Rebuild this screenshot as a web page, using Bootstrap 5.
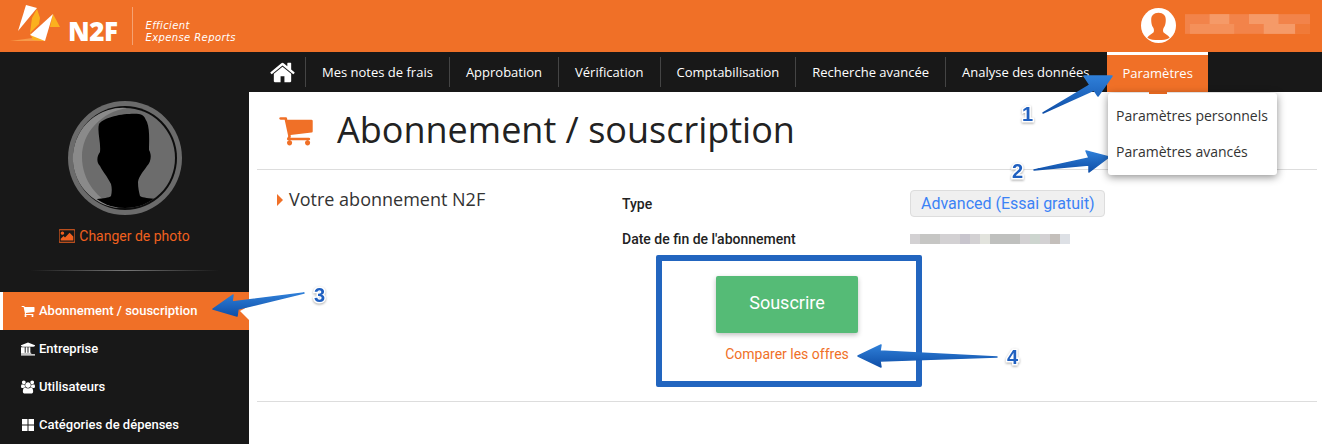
<!DOCTYPE html>
<html lang="fr">
<head>
    <meta charset="UTF-8">
    <meta name="viewport" content="width=device-width, initial-scale=1.0">
    <title>Abonnement / souscription</title>
    <link href="https://cdn.jsdelivr.net/npm/bootstrap@5.3.0/dist/css/bootstrap.min.css" rel="stylesheet">
    <style>
        html, body { height: 444px; overflow: hidden; }
        body { font-family: Roboto, sans-serif; background: #fff; position: relative; }
        svg { display: block; flex: none; }
        .top-band { height: 52px; background: #f07027; }
        .brand-word { font: 800 26px/1 "Open Sans", sans-serif; letter-spacing: -.5px; color: #fff; margin: 9px 0 0 -2px; }
        .brand-sep { width: 1px; height: 38px; background: rgba(255,255,255,.35); margin: 0 12px 0 15px; }
        .brand-tag { font: italic 400 10px/12px "DejaVu Sans", sans-serif; color: #fff; letter-spacing: .4px; margin-top: 11px; }
        .user-zone { margin-right: 12px; padding-bottom: 2px; }
        .user-blur { margin: 0 0 2px 9px; }
        .menu-band { height: 40px; background: #181818; padding-left: 257px; }
        .menu-link { font: 400 13px/40px "Open Sans", sans-serif; color: #fff; padding: 0 17px 0 16px; text-decoration: none; position: relative; white-space: nowrap; }
        .menu-link::after { content: ""; position: absolute; right: 0; top: 5px; bottom: 5px; width: 1px; background: #444; }
        .menu-home { padding: 0 10px 0 12px; display: flex; align-items: center; }
        .menu-link.last-link::after { display: none; }
        .menu-active { background: #f07027; border-top: 3px solid #fff; line-height: 36px; width: 101px; padding: 0 16px; }
        .menu-active::after { display: none; }
        .menu-drop { position: absolute; left: 1108px; top: 93px; width: 169px; height: 82px; display: block; min-width: 0; margin: 0; padding: 5px 0; border: 0; border-radius: 3px; box-shadow: 0 2px 8px rgba(0,0,0,.45); }
        .menu-drop::before { content: ""; position: absolute; left: 41px; top: -1px; width: 18px; height: 2px; background: #e2661f; }
        .menu-drop .dropdown-item { font: 400 14px/36px "Open Sans", sans-serif; padding: 0 8px; color: #333; white-space: nowrap; }
        .side-panel { width: 249px; height: 352px; background: #181818; flex: none; }
        .photo-link { font-size: 14px; color: #f0601f; text-decoration: none; margin-top: 10px; height: 20px; line-height: 20px; }
        .side-rule { height: 1px; margin: 24px 30px 21px; background: linear-gradient(90deg, #181818, #777 50%, #181818); }
        .side-link { height: 38px; padding-left: 21px; font-size: 13px; font-weight: 500; color: #fff; text-decoration: none; }
        .side-link.is-on { background: #f07027; border-left: 3px solid #fff; padding-left: 18px; }
        .main-pane { padding: 0 5px 0 8px; min-width: 0; }
        .title-row { height: 78px; border-bottom: 1px solid #ddd; padding: 0 0 1px 21px; }
        .page-title { font: 400 36px/1 "Open Sans", sans-serif; color: #222; margin: 0 0 1px 23px; }
        .body-row { height: 232px; border-bottom: 1px solid #ddd; padding: 20px 0 0 20px; }
        .section-col { width: 345px; flex: none; }
        .section-name { font: 400 18px/18px "Open Sans", sans-serif; color: #333; margin-left: 6px; }
        .section-mark { width: 0; height: 0; border-left: 6px solid #f07027; border-top: 6px solid transparent; border-bottom: 6px solid transparent; }
        .field-label { width: 288px; flex: none; font-size: 14px; font-weight: 500; line-height: 21px; padding-top: 2px; color: #222; }
        .plan-tag { background: #f0f0f0; border: 1px solid #ddd; border-radius: 4px; color: #3b82f6; font-size: 16px; line-height: 25px; padding: 0 10px 0 10px; width: 195px; white-space: nowrap; }
        .date-row { margin-top: 10px; }
        .offer-box { width: 266px; height: 132px; border: 6px solid #2265bf; border-radius: 2px; margin: 5px 0 0 34px; padding: 15px 4px 0 0; }
        .buy-btn { width: 142px; height: 57px; background: #55bb76; color: #fff; font-size: 18px; line-height: 54px; padding: 0 0 3px; border: 0; border-radius: 2px; box-shadow: 0 2px 5px rgba(0,0,0,.25); }
        .offer-link { font-size: 14px; color: #f07027; text-decoration: none; margin-top: 12px; line-height: 18px; }
        .note-layer { position: absolute; left: 0; top: 0; pointer-events: none; }
        .note-num { font: 700 20px "Liberation Sans", sans-serif; fill: #2060c0; stroke: #fff; stroke-width: 3px; paint-order: stroke; filter: drop-shadow(0 1px 1px #aaa); }
    </style>
</head>
<body>

    <header class="top-band d-flex align-items-center justify-content-between">
        <div class="d-flex align-items-center">
            <svg width="62" height="44" viewBox="0 0 62 44" class="ms-2">
                <polygon points="2,37 32,33 37,37" fill="#f79a4a"/>
                <polygon points="29,5 32,14 31,20 22,29 24,14" fill="#fbb11e"/>
                <polygon points="18,1 29,4 10,27" fill="#fff"/>
                <polygon points="22,29 37,37 25,36" fill="#fbb11e"/>
                <polygon points="45,10 52,23 42,23" fill="#fbb11e"/>
                <polygon points="45,10 37,37 22,31" fill="#fff"/>
            </svg>
            <span class="brand-word">N2F</span>
            <span class="brand-sep"></span>
            <span class="brand-tag">Efficient<br>Expense Reports</span>
        </div>
        <div class="user-zone d-flex align-items-center">
            <svg width="35" height="35" viewBox="0 0 36 36">
                <circle cx="18" cy="18" r="18" fill="#fff"/>
                <path d="M18 5c-5 0-7.500 3-7.500 7 0 3 .5 6 2 8 1 2 1 3 .5 5-2 2-5 3-6.500 5.500 3 2 7 2.500 11.500 2.500s8.500-.5 11.500-2.500c-1.500-2.500-4.500-3.500-6.500-5.500-.5-2-.5-3 .5-5 1.500-2 2-5 2-8 0-4-2.500-7-7.500-7z" fill="#f07027"/>
            </svg>
            <svg class="user-blur" width="125" height="20" viewBox="0 0 127 20" aria-hidden="true">
                <rect width="127" height="20" fill="#f2834a"/>
                <rect x="25" width="20" height="10" fill="#f59a68"/>
                <rect x="65" y="0" width="30" height="10" fill="#f59a68"/>
                <rect x="5" y="10" width="45" height="10" fill="#f4905a"/>
                <rect x="80" y="10" width="32" height="10" fill="#f59a68"/>
                <rect x="112" y="10" width="15" height="10" fill="#f07a38"/>
            </svg>
        </div>
    </header>

    <nav class="menu-band d-flex">
        <a href="#" class="menu-link menu-home">
            <svg width="27" height="27" viewBox="0 0 1792 1792"><path fill="#fff" d="M1472 992v480q0 26-19 45t-45 19h-384v-384h-256v384h-384q-26 0-45-19t-19-45v-480q0-1 .5-3t.5-3l575-474 575 474q1 2 1 6zm223-69l-62 74q-8 9-21 11h-3q-13 0-21-7l-692-577-692 577q-12 8-24 7-13-2-21-11l-62-74q-8-10-7-23.5t11-21.5l719-599q32-26 76-26t76 26l244 204v-195q0-14 9-23t23-9h192q14 0 23 9t9 23v408l219 182q10 8 11 21.5t-7 23.5z"/></svg>
        </a>
        <a href="#" class="menu-link">Mes notes de frais</a>
        <a href="#" class="menu-link">Approbation</a>
        <a href="#" class="menu-link">Vérification</a>
        <a href="#" class="menu-link">Comptabilisation</a>
        <a href="#" class="menu-link">Recherche avancée</a>
        <a href="#" class="menu-link last-link">Analyse des données</a>
        <a href="#" class="menu-link menu-active">Paramètres</a>
    </nav>

    <div class="d-flex">
        <aside class="side-panel d-flex flex-column">
            <svg class="mx-auto mt-2" width="116" height="116" viewBox="0 0 116 116">
                <defs><clipPath id="discClip"><circle cx="58" cy="58" r="50"/></clipPath></defs>
                <circle cx="58" cy="58" r="57" fill="#6b6b6b"/>
                <circle cx="58" cy="58" r="52" fill="#0c0c0c"/>
                <circle cx="58" cy="58" r="50" fill="#6c6c6c"/>
                <path d="M60 8A50 50 0 0 0 52 108C30 100 15 80 15 57 15 32 35 12 60 8z" fill="#8a8a8a"/>
                <path clip-path="url(#discClip)" d="M32 24C38 16 60 13 72 14 78 15 78 19 80 22 83 30 82 42 82 50 85 55 84 62 80 66 76 72 72 76 71 82 71 88 72 92 73 96 76 98 82 98 90 99L90 120 26 120 30 99C36 98 42 98 44 96 45 92 45 88 44 84 40 76 36 72 33 66 29 62 30 56 33 52 34 42 30 32 32 24z" fill="#000"/>
            </svg>
            <a href="#" class="photo-link d-flex align-items-center justify-content-center gap-1">
                <svg width="16" height="16" viewBox="0 0 1792 1792"><path fill="currentColor" d="M576 576q0 80-56 136t-136 56-136-56-56-136 56-136 136-56 136 56 56 136zm1024 384v448h-1408v-192l320-320 160 160 512-512zm96-704h-1600q-13 0-22.500 9.500t-9.500 22.500v1216q0 13 9.500 22.500t22.500 9.500h1600q13 0 22.500-9.500t9.500-22.500v-1216q0-13-9.500-22.500t-22.500-9.500zm160 32v1216q0 66-47 113t-113 47h-1600q-66 0-113-47t-47-113v-1216q0-66 47-113t113-47h1600q66 0 113 47t47 113z"/></svg>
                Changer de photo
            </a>
            <div class="side-rule"></div>
            <a href="#" class="side-link is-on d-flex align-items-center gap-1">
                <svg width="14" height="14" viewBox="0 0 1792 1792"><path fill="#fff" d="M704 1536q0 52-38 90t-90 38-90-38-38-90 38-90 90-38 90 38 38 90zm896 0q0 52-38 90t-90 38-90-38-38-90 38-90 90-38 90 38 38 90zm128-1088v512q0 24-16.500 42.500t-40.500 21.500l-1044 122q13 60 13 70 0 16-24 64h920q26 0 45 19t19 45-19 45-45 19h-1024q-26 0-45-19t-19-45q0-11 8-31.500t16-36 21.500-40 15.500-29.500l-177-823h-204q-26 0-45-19t-19-45 19-45 45-19h256q16 0 28.500 6.500t19.500 15.500 13 24.500 8 26 5.500 29.500 4.500 26h1201q26 0 45 19t19 45z"/></svg>
                Abonnement / souscription
            </a>
            <a href="#" class="side-link d-flex align-items-center gap-1">
                <svg width="14" height="14" viewBox="0 0 1920 1792"><path fill="#fff" d="M960 0l960 384v128h-128q0 26-20.500 45t-48.500 19h-1526q-28 0-48.500-19t-20.500-45h-128v-128zm-704 640h256v768h128v-768h256v768h128v-768h256v768h59q28 0 48.500 19t20.500 45v64h-1664v-64q0-26 20.500-45t48.500-19h59v-768zm1595 960q28 0 48.500 19t20.500 45v128h-1920v-128q0-26 20.500-45t48.500-19h1782z"/></svg>
                Entreprise
            </a>
            <a href="#" class="side-link d-flex align-items-center gap-1">
                <svg width="14" height="14" viewBox="0 0 1920 1792"><path fill="#fff" d="M593 896q-162 5-265 128h-134q-82 0-138-40.500t-56-118.500q0-353 124-353 6 0 43.500 21t97.500 42.500 119 21.500q67 0 133-23-5 37-5 66 0 139 81 256zm1071 637q0 120-73 189.500t-194 69.500h-874q-121 0-194-69.500t-73-189.500q0-53 3.500-103.500t14-109 26.500-108.500 43-97.500 62-81 85.500-53.500 111.500-20q10 0 43 21.500t73 48 107 48 135 21.500 135-21.500 107-48 73-48 43-21.500q61 0 111.500 20t85.500 53.500 62 81 43 97.500 26.500 108.500 14 109 3.500 103.500zm-1024-1277q0 106-75 181t-181 75-181-75-75-181 75-181 181-75 181 75 75 181zm704 384q0 159-112.500 271.500t-271.500 112.500-271.500-112.500-112.500-271.500 112.500-271.500 271.500-112.500 271.500 112.500 112.500 271.500zm576 225q0 78-56 118.500t-138 40.500h-134q-103-123-265-128 81-117 81-256 0-29-5-66 66 23 133 23 59 0 119-21.500t97.500-42.500 43.500-21q124 0 124 353zm-128-609q0 106-75 181t-181 75-181-75-75-181 75-181 181-75 181 75 75 181z"/></svg>
                Utilisateurs
            </a>
            <a href="#" class="side-link d-flex align-items-center gap-1">
                <svg width="14" height="14" viewBox="0 0 14 14"><path fill="#fff" d="M1 1h5.500v5.500H1zM7.500 1H13v5.500H7.500zM1 7.500h5.500V13H1zM7.500 7.500H13V13H7.500z"/></svg>
                Catégories de dépenses
            </a>
        </aside>

        <main class="main-pane flex-grow-1">
            <div class="title-row d-flex align-items-center">
                <svg width="36" height="36" viewBox="0 0 1792 1792"><path fill="#f07027" d="M704 1536q0 52-38 90t-90 38-90-38-38-90 38-90 90-38 90 38 38 90zm896 0q0 52-38 90t-90 38-90-38-38-90 38-90 90-38 90 38 38 90zm128-1088v512q0 24-16.500 42.500t-40.500 21.500l-1044 122q13 60 13 70 0 16-24 64h920q26 0 45 19t19 45-19 45-45 19h-1024q-26 0-45-19t-19-45q0-11 8-31.500t16-36 21.500-40 15.500-29.500l-177-823h-204q-26 0-45-19t-19-45 19-45 45-19h256q16 0 28.500 6.500t19.500 15.500 13 24.500 8 26 5.500 29.500 4.500 26h1201q26 0 45 19t19 45z"/></svg>
                <h1 class="page-title">Abonnement / souscription</h1>
            </div>
            <div class="body-row d-flex">
                <div class="section-col d-flex align-items-start">
                    <span class="section-mark mt-1"></span>
                    <span class="section-name">Votre abonnement N2F</span>
                </div>
                <div class="flex-grow-1">
                    <div class="d-flex align-items-center">
                        <span class="field-label">Type</span>
                        <span class="plan-tag">Advanced (Essai gratuit)</span>
                    </div>
                    <div class="date-row d-flex align-items-center">
                        <span class="field-label">Date de fin de l'abonnement</span>
                        <svg width="160" height="14" viewBox="0 0 160 14" aria-hidden="true">
                            <rect y="2" width="160" height="10" fill="#d3d1d3"/>
                            <rect x="10" y="2" width="20" height="10" fill="#c6c6c4"/>
                            <rect x="50" y="2" width="10" height="10" fill="#c8c5cd"/>
                            <rect x="80" y="2" width="30" height="10" fill="#bfc0be"/>
                            <rect x="70" y="2" width="10" height="10" fill="#e2e3dd"/>
                            <rect x="120" y="2" width="10" height="10" fill="#cdd5cf"/>
                            <rect x="140" y="2" width="10" height="10" fill="#c4bfbb"/>
                            <rect x="150" y="2" width="10" height="10" fill="#dde0e5"/>
                        </svg>
                    </div>
                    <div class="offer-box d-flex flex-column align-items-center">
                        <button type="button" class="btn buy-btn">Souscrire</button>
                        <a href="#" class="offer-link">Comparer les offres</a>
                    </div>
                </div>
            </div>
        </main>
    </div>

    <ul class="dropdown-menu menu-drop">
        <li><a class="dropdown-item" href="#">Paramètres personnels</a></li>
        <li><a class="dropdown-item" href="#">Paramètres avancés</a></li>
    </ul>

    <!-- fleches et numeros d'annotation -->
    <svg class="note-layer" width="1322" height="444" viewBox="0 0 1322 444">
        <defs>
            <linearGradient id="noteBlue" x1="0" y1="0" x2="0" y2="1">
                <stop offset="0" stop-color="#2f7fd8"/>
                <stop offset="1" stop-color="#0f4fa8"/>
            </linearGradient>
        </defs>
        <polygon points="240,311 249,306 249,320" fill="#fff"/>
        <g fill="url(#noteBlue)" stroke="url(#noteBlue)" stroke-width="1.500" stroke-linejoin="round">
            <polygon points="1043,113 1090,85 1084,76 1112,76 1098,96 1094,90"/>
            <polygon points="1034,170 1089,158 1086,151 1109,157 1089,172 1089,165"/>
            <polygon points="304,293 232,302 233,295 213,309 237,316 238,309"/>
            <polygon points="997,357 880,351 881,345 858,356 881,367 880,361"/>
        </g>
        <text class="note-num" x="1022" y="121">1</text>
        <text class="note-num" x="1012" y="178">2</text>
        <text class="note-num" x="314" y="302">3</text>
        <text class="note-num" x="1007" y="364">4</text>
    </svg>

    <script src="https://cdn.jsdelivr.net/npm/bootstrap@5.3.0/dist/js/bootstrap.bundle.min.js"></script>
</body>
</html>
